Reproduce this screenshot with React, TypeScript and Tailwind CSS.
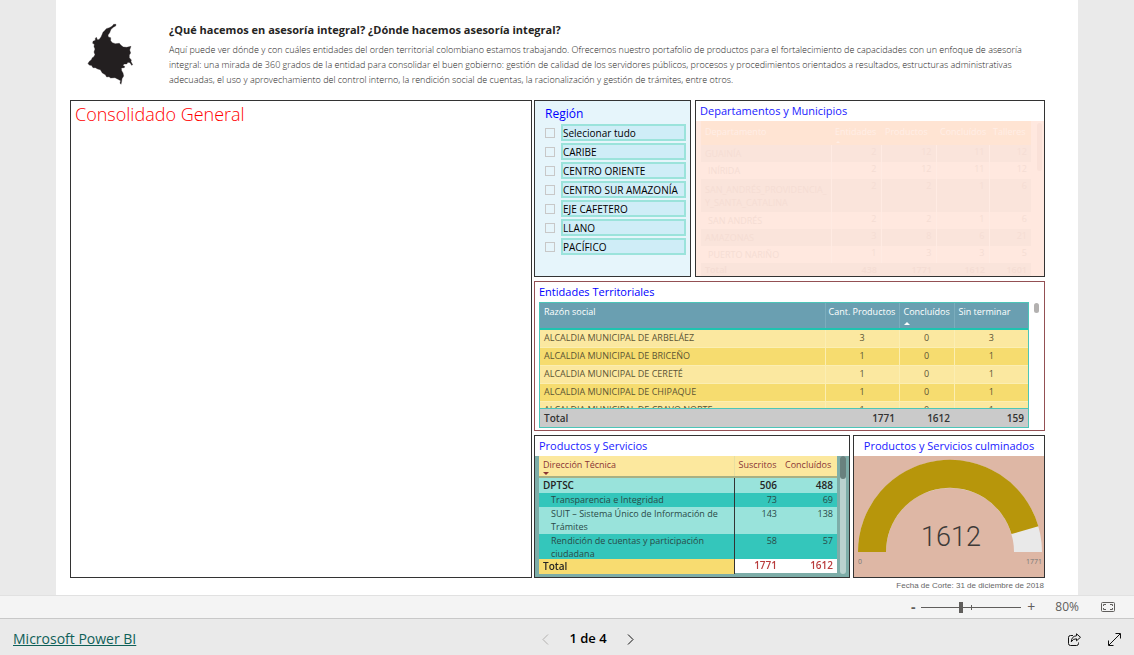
import { useState } from "react";

interface Region {
  id: string;
  name: string;
}

interface Department {
  name: string;
  child: boolean;
  values: number[];
}

const regions: Region[] = [
  { id: "all", name: "Selecionar tudo" },
  { id: "caribe", name: "CARIBE" },
  { id: "oriente", name: "CENTRO ORIENTE" },
  { id: "amazonia", name: "CENTRO SUR AMAZONÍA" },
  { id: "cafetero", name: "EJE CAFETERO" },
  { id: "llano", name: "LLANO" },
  { id: "pacifico", name: "PACÍFICO" },
];

const departments: Department[] = [
  { name: "GUAINÍA", child: false, values: [2, 12, 11, 12] },
  { name: "INÍRIDA", child: true, values: [2, 12, 11, 12] },
  {
    name: "SAN_ANDRÉS_PROVIDENCIA_ Y_SANTA_CATALINA",
    child: false,
    values: [2, 2, 1, 6],
  },
  { name: "SAN ANDRÉS", child: true, values: [2, 2, 1, 6] },
  { name: "AMAZONAS", child: false, values: [3, 8, 6, 21] },
  { name: "PUERTO NARIÑO", child: true, values: [1, 3, 3, 5] },
];

const entities = [
  { name: "ALCALDIA MUNICIPAL DE ARBELÁEZ", products: 3, done: 0, pending: 3 },
  { name: "ALCALDIA MUNICIPAL DE BRICEÑO", products: 1, done: 0, pending: 1 },
  { name: "ALCALDIA MUNICIPAL DE CERETÉ", products: 1, done: 0, pending: 1 },
  { name: "ALCALDIA MUNICIPAL DE CHIPAQUE", products: 1, done: 0, pending: 1 },
  { name: "ALCALDIA MUNICIPAL DE CRAVO NORTE", products: 1, done: 0, pending: 1 },
];

const services = [
  { name: "Transparencia e Integridad", signed: 73, done: 69 },
  {
    name: "SUIT – Sistema Único de Información de Trámites",
    signed: 143,
    done: 138,
  },
  {
    name: "Rendición de cuentas y participación ciudadana",
    signed: 58,
    done: 57,
  },
];

const ColombiaMap = () => (
  <svg viewBox="0 0 180 210" className="h-[70px] w-[60px]" aria-hidden="true">
    <path
      fill="#231f20"
      stroke="#231f20"
      strokeWidth="1"
      d="M108 19 L101 19 L96 25 L88 29 L79 32 L75 37 L69 43 L66 50 L63 57 L58 64 L53 66 L49 58 L46 61 L46 67 L39 70 L38 76 L43 79 L42 86 L45 93 L42 102 L45 110 L41 117 L37 119 L34 125 L27 131 L24 137 L29 142 L34 142 L39 149 L46 149 L53 153 L61 155 L67 165 L76 170 L80 177 L87 176 L92 180 L105 179 L114 184 L122 188 L120 195 L123 199 L125 190 L126 182 L131 174 L129 165 L125 158 L124 150 L133 149 L134 145 L129 143 L132 138 L140 138 L144 133 L150 134 L155 142 L158 140 L153 131 L154 126 L148 119 L148 111 L152 105 L149 96 L153 85 L140 88 L130 87 L123 82 L118 76 L106 77 L97 74 L92 68 L92 59 L85 57 L84 51 L89 44 L93 34 L101 27 L107 24 Z"
    />
  </svg>
);

// Region slicer with one tick box per row
const RegionSlicer = () => {
  const [selected, setSelected] = useState<string[]>([]);

  const toggleRegion = (id: string) => {
    setSelected(
      selected.includes(id)
        ? selected.filter((item) => item !== id)
        : [...selected, id]
    );
  };

  return (
    <section className="border border-[#333] bg-[#e6f5fb] pl-[10px] pr-1 pt-1">
      <h2 className="text-[12px] leading-[18px] text-[#0000ff]">Región</h2>
      <div className="mt-px flex flex-col gap-[2px]">
        {regions.map((region) => (
          <div key={region.id} className="flex items-center gap-[6px]">
            <input
              type="checkbox"
              id={region.id}
              checked={selected.includes(region.id)}
              onChange={() => toggleRegion(region.id)}
              className="size-[10px] shrink-0 appearance-none border border-[#c8c8c8] checked:bg-[#555]"
            />
            <label
              htmlFor={region.id}
              className="h-[17px] flex-1 whitespace-nowrap border-2 border-[#9be3db] bg-[#cfedf7] text-[10px] leading-[14px] text-black"
            >
              {region.name}
            </label>
          </div>
        ))}
      </div>
    </section>
  );
};

const DepartmentPanel = () => (
  <section className="flex flex-col border border-[#333]">
    <h2 className="px-1 text-[11px] leading-5 text-[#1a1aff]">
      Departamentos y Municipios
    </h2>
    <div className="flex flex-1 gap-[6px] bg-[#ffe8df] pl-[5px] pr-[2px]">
      <table className="h-[155px] min-w-0 flex-1 table-fixed text-[9px] leading-[13px] text-[#f5ddd4]">
        <colgroup>
          <col />
          <col className="w-[50px]" />
          <col className="w-[55px]" />
          <col className="w-[53px]" />
          <col className="w-[42px]" />
        </colgroup>
        <thead>
          <tr className="h-6 bg-[#ffe4d3] align-top text-left text-[#ffeee6]">
            <th className="px-1 pt-1 font-normal">Departamento</th>
            <th className="relative pl-1 pt-1 font-normal">
              Entidades
              <span className="absolute bottom-[2px] left-[5px] border-x-2 border-b-2 border-x-transparent" />
            </th>
            <th className="pl-1 pt-1 font-normal">Productos</th>
            <th className="pl-1 pt-1 font-normal">Concluídos</th>
            <th className="pl-1 pt-1 font-normal">Talleres</th>
          </tr>
        </thead>
        <tbody>
          {departments.map((row) => (
            <tr
              key={row.name}
              className={row.child ? "bg-[#ffe8df]" : "bg-[#fae4db]"}
            >
              <td className={row.child ? "pl-[7px]" : "pl-1"}>{row.name}</td>
              {row.values.map((value, index) => (
                <td
                  key={index}
                  className="border-l border-[#ffebe3] pr-1 text-right align-top"
                >
                  {value}
                </td>
              ))}
            </tr>
          ))}
        </tbody>
        <tfoot>
          <tr className="bg-[#fae4db] font-semibold">
            <td className="pl-1">Total</td>
            <td className="pr-1 text-right">438</td>
            <td className="pr-1 text-right">1771</td>
            <td className="pr-1 text-right">1612</td>
            <td className="pr-1 text-right">1601</td>
          </tr>
        </tfoot>
      </table>
      <div className="mt-[2px] h-12 w-[5px] rounded bg-[#fae1d8]" />
    </div>
  </section>
);

const EntityColumns = () => (
  <colgroup>
    <col />
    <col className="w-[74px]" />
    <col className="w-[55px]" />
    <col className="w-[74px]" />
  </colgroup>
);

const EntityPanel = () => (
  <section className="border border-[#935054] px-1 pb-[2px]">
    <h2 className="pt-px text-[11px] leading-[18px] text-[#0000ff]">
      Entidades Territoriales
    </h2>
    <div className="mt-px flex gap-[5px]">
      <div className="flex-1 border border-[#4cc5b8]">
        <div className="h-[105px] overflow-hidden">
          <table className="w-full table-fixed text-[9px] leading-[14px] text-[#5b5434]">
            <EntityColumns />
            <thead>
              <tr className="h-[26px] border-b-2 border-[#1fc3b0] bg-[#6a9fb1] text-left align-top text-white">
                <th className="px-1 pt-[2px] font-normal">Razón social</th>
                <th className="whitespace-nowrap border-l border-[#7badbd] pl-[3px] pt-[2px] font-normal">
                  Cant. Productos
                </th>
                <th className="relative border-l border-[#7badbd] pl-1 pt-[2px] font-normal">
                  Concluídos
                  <span className="absolute bottom-[3px] left-1 border-x-[3px] border-b-[3px] border-x-transparent border-b-white" />
                </th>
                <th className="border-l border-[#7badbd] pl-1 pt-[2px] font-normal">
                  Sin terminar
                </th>
              </tr>
            </thead>
            <tbody>
              {entities.map((row) => (
                <tr
                  key={row.name}
                  className="h-[18px] border-b border-[#fbeeb2] odd:bg-[#fbe8a0] even:bg-[#f6dc6f]"
                >
                  <td className="whitespace-nowrap px-1">{row.name}</td>
                  <td className="border-l border-[#fbeeb2] text-center">
                    {row.products}
                  </td>
                  <td className="border-l border-[#fbeeb2] text-center">
                    {row.done}
                  </td>
                  <td className="border-l border-[#fbeeb2] text-center">
                    {row.pending}
                  </td>
                </tr>
              ))}
            </tbody>
          </table>
        </div>
        {/* Fixed total */}
        <table className="w-full table-fixed text-[10px] leading-[14px]">
          <EntityColumns />
          <tbody>
            <tr className="h-[18px] border-t border-[#4cc5b8] bg-[#cacaca] font-semibold text-[#333]">
              <td className="px-1">Total</td>
              <td className="pr-1 text-right">1771</td>
              <td className="pr-1 text-right">1612</td>
              <td className="pr-1 text-right">159</td>
            </tr>
          </tbody>
        </table>
      </div>
      <div className="mr-px mt-px h-[10px] w-[5px] rounded-full bg-[#b3b1b0]" />
    </div>
  </section>
);

const ServicesPanel = () => (
  <section className="flex flex-col border border-[#333]">
    <h2 className="px-1 text-[11px] leading-5 text-[#1a1aff]">
      Productos y Servicios
    </h2>
    <div className="flex flex-1 gap-[3px] bg-[#7dada8] pl-1 pr-[3px]">
      <div className="h-[118px] flex-1 overflow-hidden">
        <table className="w-full table-fixed text-[9px] leading-[13px] text-[#2a4a47]">
          <colgroup>
            <col />
            <col className="w-[47px]" />
            <col className="w-[56px]" />
          </colgroup>
          <thead>
            <tr className="h-[21px] border-b-2 border-[#a8b184] bg-[#fce89e] text-left align-top text-[#8a3535]">
              <th className="relative px-1 pt-[2px] font-normal">
                Dirección Técnica
                <span className="absolute bottom-px left-1 border-x-[3px] border-t-[3px] border-x-transparent border-t-[#8a3535]" />
              </th>
              <th className="border-l border-[#e8dfa0] pl-1 pt-[2px] font-normal">
                Suscritos
              </th>
              <th className="pl-1 pt-[2px] font-normal">Concluídos</th>
            </tr>
          </thead>
          <tbody>
            <tr className="h-[16px] bg-[#99e3db] text-[10px] font-semibold text-[#252423]">
              <td className="px-1">DPTSC</td>
              <td className="border-l border-t border-[#333] pr-1 text-right">
                506
              </td>
              <td className="border-t border-t-[#333] pr-1 text-right">488</td>
            </tr>
            {services.map((row) => (
              <tr
                key={row.name}
                className="align-top odd:bg-[#99e3db] even:bg-[#34c6bb]"
              >
                <td className="pb-px pl-3 pr-2">{row.name}</td>
                <td className="border-l border-[#333] pr-1 text-right">
                  {row.signed}
                </td>
                <td className="pr-1 text-right">{row.done}</td>
              </tr>
            ))}
          </tbody>
          <tfoot className="sticky bottom-0">
            <tr className="h-[15px] bg-[#f8dc70] text-[10px] font-semibold text-[#252423]">
              <td className="px-1">Total</td>
              <td className="border-b border-l border-[#333] bg-white pr-1 text-right text-[#b83c3c]">
                1771
              </td>
              <td className="border-b border-[#333] bg-white pr-1 text-right text-[#b83c3c]">
                1612
              </td>
            </tr>
          </tfoot>
        </table>
      </div>
      <div className="h-[118px] w-[6px] rounded-full bg-[#b9d2cf]">
        <div className="h-[23px] rounded-full bg-[#69817e]" />
      </div>
    </div>
  </section>
);

const GaugePanel = () => (
  <section className="flex flex-col border border-[#333]">
    <h2 className="whitespace-nowrap text-center text-[11px] leading-5 text-[#1a1aff]">
      Productos y Servicios culminados
    </h2>
    <div className="flex-1 bg-[#deb7a5]">
      <svg viewBox="0 0 190 121" className="w-full" role="img">
        <path fill="#e9e9e9" d="M4 96 A92 92 0 0 1 188 96 L160 96 A64 64 0 0 0 32 96 Z" />
        <path
          fill="#b7960b"
          d="M4 96 A92 92 0 0 1 184.400 70.300 L157.500 78.100 A64 64 0 0 0 32 96 Z"
        />
        <text
          x="97"
          y="90"
          textAnchor="middle"
          className="fill-[#3d3a38] font-['Roboto',sans-serif] text-[27px] font-light"
        >
          1612
        </text>
        <text x="4" y="108" className="fill-[#777] text-[7px]">
          0
        </text>
        <text x="188" y="108" textAnchor="end" className="fill-[#777] text-[7px]">
          1771
        </text>
      </svg>
    </div>
  </section>
);

const ZoomBar = () => {
  const [zoom, setZoom] = useState(39);

  return (
    <div className="flex h-[23px] items-center justify-end border-t border-[#e1e1e1] bg-[#f4f4f4] pr-[19px] text-[#605e5c]">
      <button aria-label="Alejar" className="w-2 text-center text-[14px] font-bold leading-4">
        -
      </button>
      <div className="relative mx-1 flex h-[11px] w-[100px] items-center">
        <span className="absolute left-1/2 top-[3px] h-[5px] w-px bg-[#605e5c]" />
        <input
          type="range"
          aria-label="Zoom"
          value={zoom}
          onChange={(e) => setZoom(Number(e.target.value))}
          className="h-px w-full appearance-none bg-[#605e5c] [&::-webkit-slider-thumb]:h-[11px] [&::-webkit-slider-thumb]:w-1 [&::-webkit-slider-thumb]:appearance-none [&::-webkit-slider-thumb]:bg-[#605e5c]"
        />
      </div>
      <button aria-label="Acercar" className="w-3 text-center text-[14px] leading-4">
        +
      </button>
      <span className="ml-[18px] text-[12px]">80%</span>
      <button aria-label="Ajustar a la página" className="ml-[22px]">
        <svg viewBox="0 0 14 10" className="h-[10px] w-[14px]" fill="none" stroke="#605e5c">
          <rect x="0.500" y="0.500" width="13" height="9" rx="1" />
          <path d="M5 2.500 H2.500 V4 M9 2.500 H11.500 V4 M5 7.500 H2.500 V6 M9 7.500 H11.500 V6" />
        </svg>
      </button>
    </div>
  );
};

const Footer = () => (
  <footer className="grid h-[37px] grid-cols-3 items-center border-t border-[#c8c8c8] bg-[#eaeaea] px-[13px] pt-1">
    <a href="#" className="text-[14px] leading-5 text-[#0f6058] underline">
      Microsoft Power BI
    </a>
    <div className="flex items-center justify-center gap-[20px] pl-[42px]">
      <button aria-label="Página anterior" disabled>
        <svg viewBox="0 0 7 11" className="h-[11px] w-[7px]" fill="none" stroke="#b3b1af">
          <path d="M6 0.500 L1 5.500 L6 10.500" />
        </svg>
      </button>
      <span className="text-[13px] font-semibold text-black">1 de 4</span>
      <button aria-label="Página siguiente">
        <svg viewBox="0 0 7 11" className="h-[11px] w-[7px]" fill="none" stroke="#111">
          <path d="M1 0.500 L6 5.500 L1 10.500" />
        </svg>
      </button>
    </div>
    <div className="flex items-center justify-end gap-[27px]">
      <button aria-label="Compartir">
        <svg viewBox="0 0 13 13" className="size-[13px]" fill="none" stroke="#111" strokeLinejoin="round">
          <path d="M5 2.500 H2.500 Q0.500 2.500 0.500 4.500 V10.500 Q0.500 12.500 2.500 12.500 H8.500 Q10.500 12.500 10.500 10.500 V9.500" />
          <path d="M8.500 0.800 L12.500 4.300 L8.500 7.800 V5.800 Q5 5.500 3.300 8.800 Q3.500 3.200 8.500 2.800 Z" />
        </svg>
      </button>
      <button aria-label="Pantalla completa">
        <svg viewBox="0 0 13 13" className="size-[13px]" fill="none" stroke="#111">
          <path d="M1 12 L12 1 M7.500 0.500 H12.500 V5.500 M0.500 7.500 V12.500 H5.500" />
        </svg>
      </button>
    </div>
  </footer>
);

const App = () => {
  return (
    <div className="flex min-h-screen flex-col bg-[#eaeaea] font-['Open_Sans',sans-serif]">
      <main className="mx-14 flex-1 bg-white pl-[14px] pr-[33px]">
        {/* Intro */}
        <header className="flex h-[100px] gap-[29px] pl-[10px] pt-[18px]">
          <ColombiaMap />
          <div className="min-w-0 flex-1 pt-1">
            <h1 className="text-[11px] font-bold leading-4 text-[#252423]">
              ¿Qué hacemos en asesoría integral? ¿Dónde hacemos asesoría integral?
            </h1>
            <p className="mt-1 whitespace-nowrap text-[9px] font-light leading-[15px] text-[#252423]">
              Aquí puede ver dónde y con cuáles entidades del orden territorial
              colombiano estamos trabajando. Ofrecemos nuestro portafolio de
              productos para el fortalecimiento de capacidades con un enfoque de
              asesoría
              <br />
              integral: una mirada de 360 grados de la entidad para consolidar el
              buen gobierno: gestión de calidad de los servidores públicos,
              procesos y procedimientos orientados a resultados, estructuras
              administrativas
              <br />
              adecuadas, el uso y aprovechamiento del control interno, la
              rendición social de cuentas, la racionalización y gestión de
              trámites, entre otros.
            </p>
          </div>
        </header>

        {/* Report panels */}
        <div className="grid grid-cols-[462fr_511fr] gap-[2px]">
          <section className="border border-[#333] px-1">
            <h2 className="text-[18px] font-light leading-[26px] text-[#ff0000]">
              Consolidado General
            </h2>
          </section>
          <div className="flex flex-col gap-1">
            <div className="grid grid-cols-[157fr_350fr] gap-1">
              <RegionSlicer />
              <DepartmentPanel />
            </div>
            <EntityPanel />
            <div className="grid grid-cols-[316fr_192fr] gap-[3px]">
              <ServicesPanel />
              <GaugePanel />
            </div>
          </div>
        </div>
        <p className="pr-px pt-[2px] text-right font-['Liberation_Sans',sans-serif] text-[8px] leading-3 text-[#666]">
          Fecha de Corte: 31 de diciembre de 2018
        </p>
      </main>
      <ZoomBar />
      <Footer />
    </div>
  );
};

export default App;
